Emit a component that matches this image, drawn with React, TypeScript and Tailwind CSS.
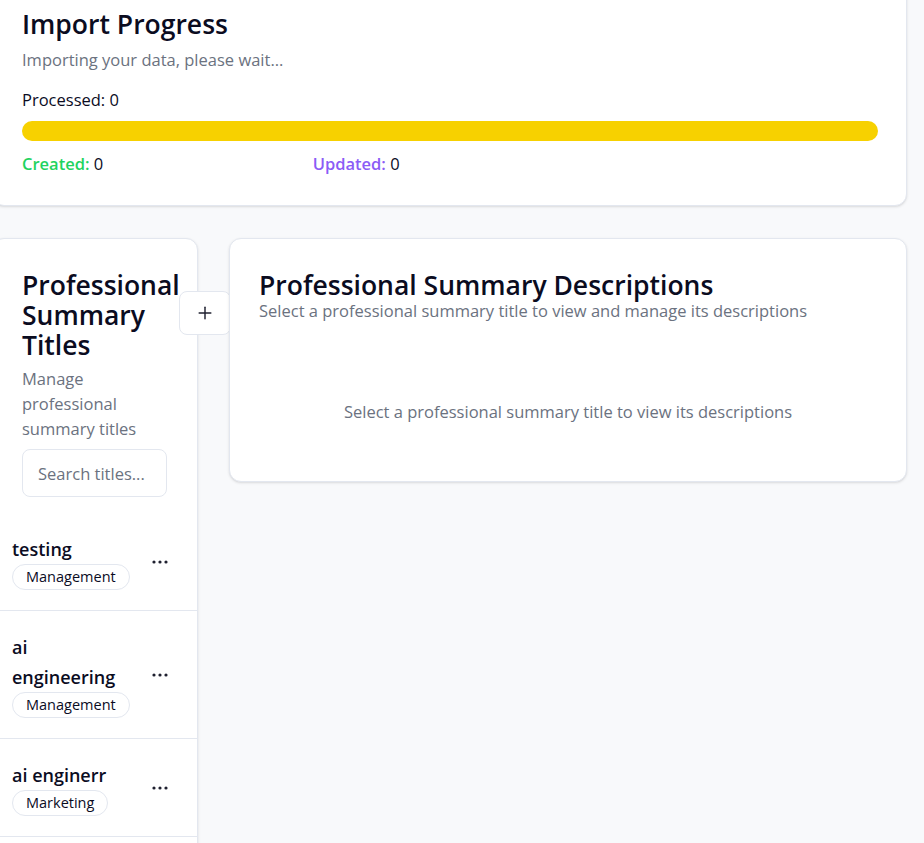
import { Plus } from "lucide-react";

const titles = [
  { name: "testing", category: "Management" },
  { name: "ai engineering", category: "Management" },
  { name: "ai enginerr", category: "Marketing" },
];

function Dots() {
  return (
    <svg width="16" height="4" viewBox="0 0 16 4" fill="currentColor">
      <circle cx="2" cy="2" r="1.6" />
      <circle cx="8" cy="2" r="1.6" />
      <circle cx="14" cy="2" r="1.6" />
    </svg>
  );
}

export default function App() {
  return (
    <div className="h-screen overflow-hidden bg-[#f8f9fb] font-['Open_Sans','Noto_Sans',sans-serif] text-[#0b0c1f]">
      {/* Import progress */}
      <div className="ml-[-8px] mt-[-18px] w-[915px] rounded-xl border border-[#e3e7ef] bg-white pl-[29px] pr-[28px] pt-[23px] pb-[29px] shadow-sm">
        <h2 className="text-[26.5px] leading-9 font-semibold">Import Progress</h2>
        <p className="mt-[6px] text-[16.5px] leading-6 text-[#6b7280]">Importing your data, please wait...</p>
        <div className="mt-4 text-[16.5px] leading-6">Processed: 0</div>
        <div className="mt-[9px] h-5 w-full rounded-full bg-[#f7d100]" />
        <div className="mt-[11px] grid grid-cols-3 gap-4 text-[16.5px] leading-6">
          <div>
            <span className="font-semibold text-[#1fd35f]">Created:</span> 0
          </div>
          <div>
            <span className="font-semibold text-[#8b5cf6]">Updated:</span> 0
          </div>
        </div>
      </div>

      <div className="mt-8 flex items-start gap-[31px]">
        {/* Titles panel */}
        <div className="ml-[-8px] h-[640px] w-[206px] shrink-0 rounded-xl border border-[#e3e7ef] bg-white shadow-sm">
          <div className="pl-[29px] pt-[31px]">
            <div className="flex items-start">
              <h2 className="w-[157px] shrink-0 text-[26.5px] leading-[30px] font-semibold">
                Professional Summary Titles
              </h2>
              <button className="mt-[21px] flex h-[44px] w-[52px] shrink-0 items-center justify-center rounded-lg border border-[#e3e7ef] bg-white">
                <Plus className="h-5 w-5 text-[#1f2030]" strokeWidth={1.75} />
              </button>
            </div>
            <p className="mt-[6px] w-[140px] text-[16.5px] leading-[25px] text-[#6b7280]">
              Manage professional summary titles
            </p>
            <input
              placeholder="Search titles..."
              className="mt-2 h-12 w-[145px] rounded-lg border border-[#e3e7ef] px-[15px] text-[16.5px] outline-none placeholder:text-[#6b7280]"
            />
          </div>

          <div className="mt-4">
            {titles.map((t) => (
              <div
                key={t.name}
                className="flex items-center justify-between border-b border-[#e3e7ef] pt-[21px] pb-5 pl-[19px] pr-[17px]"
              >
                <div>
                  <div className="max-w-[115px] text-lg leading-[30px] font-semibold">{t.name}</div>
                  <span className="inline-flex h-[26px] items-center rounded-full border border-[#e3e7ef] px-[13px] text-[14.5px] font-medium">
                    {t.category}
                  </span>
                </div>
                <button className="flex h-8 w-10 items-center justify-center text-[#1f2030]">
                  <Dots />
                </button>
              </div>
            ))}
          </div>
        </div>

        {/* Descriptions panel */}
        <div className="w-[678px] shrink-0 rounded-xl border border-[#e3e7ef] bg-white pl-[29px] pr-[29px] pt-[32px] pb-[57px] shadow-sm">
          <h2 className="text-[26.5px] leading-7 font-semibold">Professional Summary Descriptions</h2>
          <p className="mt-[2px] text-[16.5px] leading-5 text-[#6b7280]">
            Select a professional summary title to view and manage its descriptions
          </p>
          <p className="mt-[79px] text-center text-[16.5px] leading-6 text-[#6b7280]">
            Select a professional summary title to view its descriptions
          </p>
        </div>
      </div>
    </div>
  );
}
